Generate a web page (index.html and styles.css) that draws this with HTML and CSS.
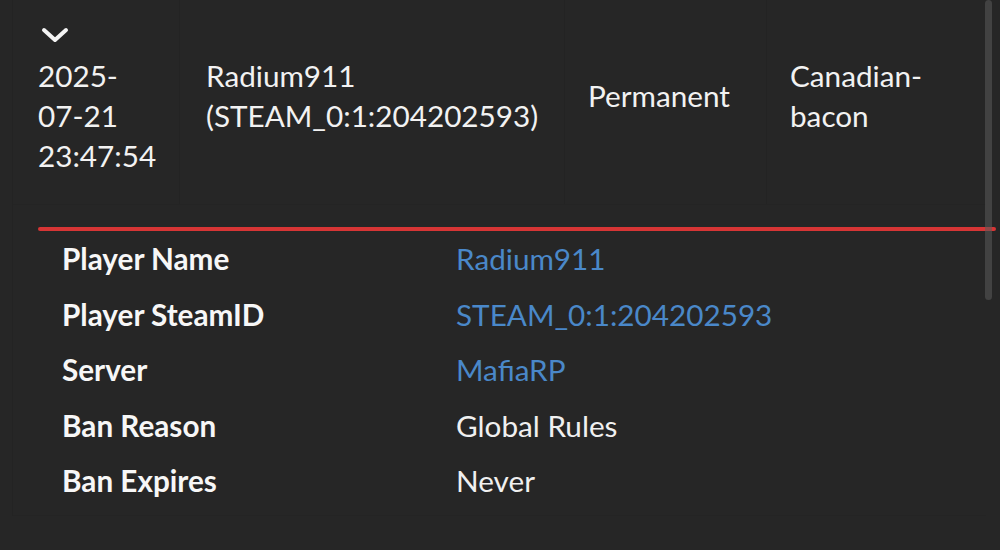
FILE: index.html
```html
<!DOCTYPE html>
<html lang="en">
<head>
<meta charset="utf-8">
<title>Ban details</title>
<link rel="stylesheet" href="styles.css">
</head>
<body>
<div class="page">
  <div class="table">
    <div class="row">
      <div class="cell c-date">
        <svg class="chev" width="28" height="16" viewBox="0 0 28 16"><path d="M3 3 L14 13 L25 3" fill="none" stroke="#f4f4f4" stroke-width="4" stroke-linecap="round" stroke-linejoin="round"/></svg>
        <div class="txt">2025-<br>07-21<br>23:47:54</div>
      </div>
      <div class="cell c-name"><div class="txt">Radium911<br>(STEAM_0:1:204202593)</div></div>
      <div class="cell c-len"><div class="txt">Permanent</div></div>
      <div class="cell c-admin"><div class="txt">Canadian-<br>bacon</div></div>
    </div>
    <div class="detail">
      <div class="rule"></div>
      <dl class="info">
        <dt>Player Name</dt><dd class="link">Radium911</dd>
        <dt>Player SteamID</dt><dd class="link">STEAM_0:1:204202593</dd>
        <dt>Server</dt><dd class="link">MafiaRP</dd>
        <dt>Ban Reason</dt><dd>Global Rules</dd>
        <dt>Ban Expires</dt><dd>Never</dd>
      </dl>
    </div>
  </div>
  <div class="scrollbar"></div>
</div>
</body>
</html>
```

FILE: styles.css
```css
html, body {
  margin: 0;
  padding: 0;
  background: #262626;
}
body {
  font-family: Lato, "Open Sans", sans-serif;
  color: #f2f2f2;
  width: 1000px;
  height: 550px;
  overflow: hidden;
}
.page {
  position: relative;
  height: 550px;
  padding-left: 12px;
  box-sizing: border-box;
}
.table {
  width: 973px;
  border-left: 1px solid #232323;
}
.row {
  display: grid;
  grid-template-columns: 167px 385px 202px 218px;
  border-bottom: 1px solid #242424;
}
.cell {
  border-right: 1px solid #232323;
  font-size: 29.7px;
  line-height: 40px;
  padding-top: 56px;
  padding-bottom: 28px;
}
.c-date {
  padding-left: 25px;
  padding-top: 27px;
}
.chev {
  display: block;
  margin-left: 3px;
  margin-bottom: 13px;
}
.c-name { padding-left: 26px; }
.c-len { padding-left: 23px; padding-top: 76px; }
.c-admin { padding-left: 23px; border-right: none; }
.detail {
  padding-top: 22px;
  padding-bottom: 6px;
  border-bottom: 1px solid #242424;
}
.rule {
  height: 4px;
  margin-left: 25px;
  margin-right: -10px;
  background: #d63535;
  border-radius: 2px;
}
.info {
  display: grid;
  grid-template-columns: 394px 1fr;
  margin: 0;
  padding-left: 49px;
  font-size: 29.7px;
  line-height: 55.5px;
}
.info dt {
  font-weight: 700;
  color: #f7f7f7;
}
.info dd {
  margin: 0;
  color: #f0f0f0;
}
.info dd.link {
  color: #4a88c9;
}
.scrollbar {
  position: absolute;
  top: 0;
  left: 985px;
  width: 7px;
  height: 300px;
  border-radius: 4px;
  background: rgba(90, 90, 90, 0.55);
}
```
